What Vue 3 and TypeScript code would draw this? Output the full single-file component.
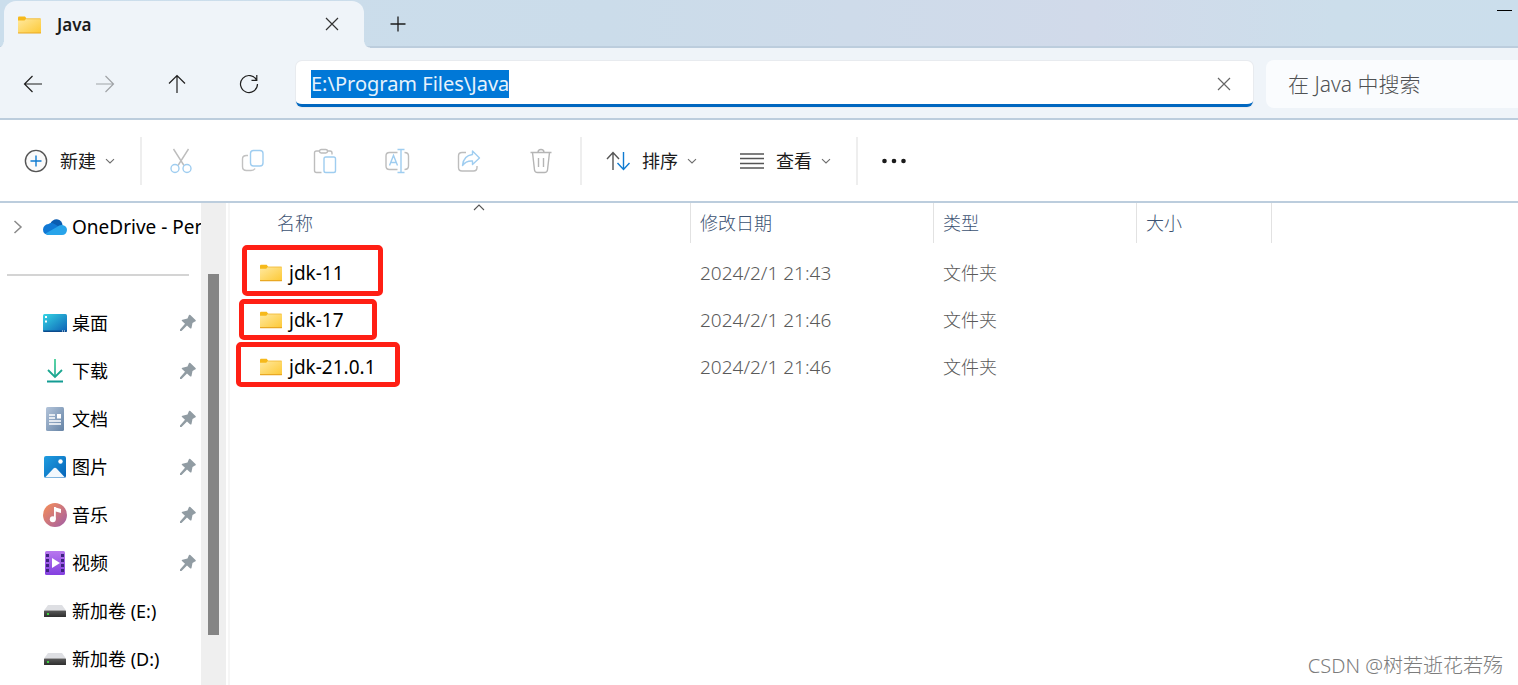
<script setup lang="ts">
import { onMounted, ref } from 'vue'

interface QuickItem {
  id: string
  label: string
  pinned: boolean
}

interface Entry {
  name: string
  modified: string
  kind: string
  mark: string
}

const path = ref<string>('E:\\Program Files\\Java')
const query = ref<string>('')
const addressInput = ref<HTMLInputElement | null>(null)

const quickItems: QuickItem[] = [
  { id: 'desktop', label: '桌面', pinned: true },
  { id: 'downloads', label: '下载', pinned: true },
  { id: 'documents', label: '文档', pinned: true },
  { id: 'pictures', label: '图片', pinned: true },
  { id: 'music', label: '音乐', pinned: true },
  { id: 'videos', label: '视频', pinned: true },
  { id: 'drive', label: '新加卷 (E:)', pinned: false },
  { id: 'drive', label: '新加卷 (D:)', pinned: false },
]

const entries: Entry[] = [
  { name: 'jdk-11', modified: '2024/2/1 21:43', kind: '文件夹', mark: 'mark-a' },
  { name: 'jdk-17', modified: '2024/2/1 21:46', kind: '文件夹', mark: 'mark-b' },
  { name: 'jdk-21.0.1', modified: '2024/2/1 21:46', kind: '文件夹', mark: 'mark-c' },
]

onMounted(() => {
  addressInput.value?.focus()
  addressInput.value?.select()
})
</script>

<template>
  <div class="explorer">
    <!-- Shared gradients and symbols -->
    <svg class="defs" width="0" height="0" aria-hidden="true">
      <defs>
        <linearGradient id="g-folder" x1="0" y1="0" x2="1" y2="1">
          <stop offset="0" stop-color="#ffe9a0" />
          <stop offset="1" stop-color="#fdc936" />
        </linearGradient>
        <linearGradient id="g-desktop" x1="0" y1="0" x2="1" y2="1">
          <stop offset="0" stop-color="#35d5e4" />
          <stop offset="1" stop-color="#0c5fb5" />
        </linearGradient>
        <linearGradient id="g-download" x1="0" y1="0" x2="0" y2="1">
          <stop offset="0" stop-color="#2ecb8c" />
          <stop offset="1" stop-color="#129a93" />
        </linearGradient>
        <linearGradient id="g-document" x1="0" y1="0" x2="1" y2="1">
          <stop offset="0" stop-color="#b3c4da" />
          <stop offset="1" stop-color="#6583a5" />
        </linearGradient>
        <linearGradient id="g-picture" x1="0" y1="0" x2="1" y2="1">
          <stop offset="0" stop-color="#1f9de0" />
          <stop offset="1" stop-color="#0563b8" />
        </linearGradient>
        <linearGradient id="g-music" x1="0" y1="0" x2="1" y2="1">
          <stop offset="0.1" stop-color="#f08a5d" />
          <stop offset="0.9" stop-color="#a9629f" />
        </linearGradient>
        <linearGradient id="g-video" x1="0" y1="0" x2="0" y2="1">
          <stop offset="0" stop-color="#b878ee" />
          <stop offset="1" stop-color="#8440e0" />
        </linearGradient>
        <linearGradient id="g-drive" x1="0" y1="0" x2="0" y2="1">
          <stop offset="0" stop-color="#5a5a5a" />
          <stop offset="1" stop-color="#2e2e2e" />
        </linearGradient>
      </defs>
      <symbol id="s-folder" viewBox="0 0 23 18">
        <path d="M0 1.5Q0 .5 1 .5H7L9 3V5H0z" fill="#f6b91b" />
        <path d="M0 4.5H6.5L8.5 2.5H22Q23 2.5 23 3.5V17H0z" fill="url(#g-folder)" />
        <path d="M8.5 2.8H22.6" stroke="#efb93a" stroke-width=".8" />
        <path d="M0 16.4H23V17Q23 17.6 22.2 17.6H.8Q0 17.6 0 17z" fill="#e9a823" />
      </symbol>
      <symbol id="s-chevron" viewBox="0 0 12 12">
        <path d="M2 4.2L6 8L10 4.2" fill="none" stroke="#6d6d6d" stroke-width="1.1" />
      </symbol>
      <symbol id="s-close" viewBox="0 0 14 14">
        <path d="M1 1L13 13M13 1L1 13" fill="none" stroke="currentColor" stroke-width="1.2" />
      </symbol>
    </svg>

    <header class="tabs">
      <div class="tab">
        <svg class="tab-folder"><use href="#s-folder" /></svg>
        <span class="tab-title">Java</span>
        <button class="plain tab-close" type="button" aria-label="关闭选项卡">
          <svg width="14" height="14"><use href="#s-close" /></svg>
        </button>
      </div>
      <button class="plain tab-new" type="button" aria-label="新建选项卡">
        <svg width="16" height="16" viewBox="0 0 16 16">
          <path d="M8 .5V15.5M.5 8H15.5" stroke="#1c1c1c" stroke-width="1.3" />
        </svg>
      </button>
      <button class="plain minimize" type="button" aria-label="最小化">
        <svg width="16" height="2"><rect width="15" height="1" x="0" y="0" fill="#000" /></svg>
      </button>
    </header>

    <nav class="navbar">
      <button class="plain tool" type="button" aria-label="后退">
        <svg width="20" height="20" viewBox="0 0 20 20">
          <path d="M19 10H1.5M9.5 2L1.5 10L9.5 18" fill="none" stroke="#1f1f1f" stroke-width="1.2" />
        </svg>
      </button>
      <button class="plain tool" type="button" aria-label="前进" disabled>
        <svg width="20" height="20" viewBox="0 0 20 20">
          <path d="M1 10H18.5M10.5 2L18.5 10L10.5 18" fill="none" stroke="#a0a3a7" stroke-width="1.2" />
        </svg>
      </button>
      <button class="plain tool" type="button" aria-label="向上">
        <svg width="20" height="20" viewBox="0 0 20 20">
          <path d="M10 19V1.5M2 9.5L10 1.5L18 9.5" fill="none" stroke="#1f1f1f" stroke-width="1.2" />
        </svg>
      </button>
      <button class="plain tool" type="button" aria-label="刷新">
        <svg width="20" height="20" viewBox="0 0 20 20">
          <path d="M17.6 6.2A8.5 8.500 0 1 0 18.5 10M17.800 1V6.300H12.500" fill="none" stroke="#1f1f1f" stroke-width="1.2" />
        </svg>
      </button>

      <div class="address">
        <input ref="addressInput" v-model="path" type="text" aria-label="地址" spellcheck="false" />
        <button class="plain address-clear" type="button" aria-label="清除">
          <svg width="14" height="14"><use href="#s-close" /></svg>
        </button>
      </div>
      <input v-model="query" class="search" type="text" aria-label="搜索" placeholder="在 Java 中搜索" />
    </nav>

    <div class="toolbar">
      <button class="plain command" type="button">
        <svg width="24" height="24" viewBox="0 0 24 24">
          <circle cx="12" cy="12" r="10.6" fill="#fafafa" stroke="#555" stroke-width="1.4" />
          <path d="M12 6.5V17.5M6.5 12H17.5" stroke="#0f7bd1" stroke-width="1.4" />
        </svg>
        <span>新建</span>
        <svg class="chevron"><use href="#s-chevron" /></svg>
      </button>
      <span class="divider"></span>
      <div class="icon-group">
        <button class="plain tool" type="button" aria-label="剪切" disabled>
          <svg width="24" height="26" viewBox="0 0 24 26" fill="none" stroke-width="1.4">
            <path d="M4.5 1L15 17.5M19.5 1L9 17.5" stroke="#bdbdbd" />
            <circle cx="6" cy="20.5" r="4" stroke="#9fcdf0" />
            <circle cx="18" cy="20.5" r="4" stroke="#9fcdf0" />
          </svg>
        </button>
        <button class="plain tool" type="button" aria-label="复制" disabled>
          <svg width="24" height="24" viewBox="0 0 24 24" fill="none" stroke-width="1.4">
            <path d="M7 6.5H5.5Q1.5 6.5 1.5 10V17.5Q1.5 21.5 5.5 21.5H10Q13 21.5 14 19.5" stroke="#c2c2c2" />
            <rect x="9.5" y="1.5" width="12.5" height="15.5" rx="3" stroke="#9fcdf0" />
          </svg>
        </button>
        <button class="plain tool" type="button" aria-label="粘贴" disabled>
          <svg width="24" height="26" viewBox="0 0 24 26" fill="none" stroke-width="1.4">
            <path d="M6.5 3H3.5Q1.5 3 1.5 5V22.5Q1.5 24.5 3.5 24.5H8.5M14 3H17Q19 3 19 5V6.5" stroke="#bdbdbd" />
            <rect x="6.5" y="1.5" width="8" height="3.5" rx="1.7" stroke="#bdbdbd" />
            <rect x="11" y="9" width="11.5" height="15.5" rx="1.8" stroke="#9fcdf0" />
          </svg>
        </button>
        <button class="plain tool" type="button" aria-label="重命名" disabled>
          <svg width="26" height="26" viewBox="0 0 26 26" fill="none" stroke-width="1.4">
            <path d="M13.5 4.5H5.5Q2 4.5 2 8V18Q2 21.5 5.5 21.5H13.5M20.5 4.5Q24.5 4.5 24.5 8V18Q24.5 21.5 20.5 21.5" stroke="#bdbdbd" />
            <path d="M17 1.5V24.5M13.5 1.5H20.5M13.5 24.5H20.5M5.5 17.5L9.5 7.5L13.5 17.5M7 14.5H12" stroke="#9fcdf0" />
          </svg>
        </button>
        <button class="plain tool" type="button" aria-label="共享" disabled>
          <svg width="24" height="24" viewBox="0 0 24 24" fill="none" stroke-width="1.4">
            <path d="M9 3.5H5Q1.5 3.5 1.5 7V18.5Q1.5 22 5 22H16.5Q20 22 20 18.5V17" stroke="#bdbdbd" />
            <path d="M15.5 2L22.5 9L15.5 15.5V12Q9 11.5 5.5 16.5Q6.5 6.5 15.5 5.5z" stroke="#9fcdf0" stroke-linejoin="round" />
          </svg>
        </button>
        <button class="plain tool" type="button" aria-label="删除" disabled>
          <svg width="24" height="26" viewBox="0 0 24 26" fill="none" stroke="#b5b5b5" stroke-width="1.4">
            <path d="M1.5 4.5H22.5M9 4.5Q9 1.5 12 1.5T15 4.5M3.5 4.5L5.5 22Q5.8 24.5 8.5 24.5H15.5Q18.2 24.5 18.5 22L20.5 4.5M9.5 10V19M14.5 10V19" />
          </svg>
        </button>
      </div>
      <span class="divider"></span>
      <button class="plain command" type="button">
        <svg width="24" height="20" viewBox="0 0 24 20" fill="none" stroke-width="1.4">
          <path d="M7 19V1.5M1 8L7 1.5L13 8" stroke="#555" />
          <path d="M17.5 1V18.5M11.5 12L17.5 18.5L23.5 12" stroke="#0f7bd1" />
        </svg>
        <span>排序</span>
        <svg class="chevron"><use href="#s-chevron" /></svg>
      </button>
      <button class="plain command view" type="button">
        <svg width="24" height="18" viewBox="0 0 24 18">
          <path d="M0 2H24M0 6.5H24M0 11.5H24M0 16H24" stroke="#555" stroke-width="1.3" />
        </svg>
        <span>查看</span>
        <svg class="chevron"><use href="#s-chevron" /></svg>
      </button>
      <span class="divider"></span>
      <button class="plain more" type="button" aria-label="查看更多">
        <svg width="24" height="6" viewBox="0 0 24 6" fill="#1b1b1b">
          <circle cx="2.5" cy="3" r="2.3" /><circle cx="12" cy="3" r="2.3" /><circle cx="21.5" cy="3" r="2.3" />
        </svg>
      </button>
    </div>

    <div class="content">
      <aside class="sidebar">
        <a class="side-item cloud" href="#">
          <svg class="expander" width="10" height="16" viewBox="0 0 10 16">
            <path d="M1.5 2L8 8L1.5 14" fill="none" stroke="#8a8a8a" stroke-width="1.5" />
          </svg>
          <svg class="side-icon" viewBox="0 0 24 24">
            <path d="M7 9Q10 3.5 15 4.5Q19 5.5 19.5 10L12 14z" fill="#0a5cb0" />
            <path d="M5 20Q0 19 0 14.5Q.5 9.5 5.5 9Q8 7 11.5 9L18 13L8 20z" fill="#1078d4" />
            <path d="M2.5 18.5L14 12Q16.5 9.500 19.500 10Q24 11 24 15Q23.500 20 19 20H6Q4 20 2.500 18.500z" fill="#28a4ea" />
          </svg>
          <span>OneDrive - Per</span>
        </a>
        <hr />
        <a v-for="item in quickItems" :key="item.label" class="side-item" href="#">
          <svg class="side-icon" viewBox="0 0 24 24">
            <template v-if="item.id === 'desktop'">
              <rect x="0" y="3" width="24" height="18" rx="1.5" fill="url(#g-desktop)" />
              <path d="M0 19.5H24Q24 21 22.5 21H1.5Q0 21 0 19.5z" fill="#0b4a8c" />
              <path d="M2 5H4V7H2zM2 9.5H4V11.5H2zM19 19.5H20V20.5H19zM21 19.5H22V20.5H21z" fill="#fff" />
            </template>
            <template v-else-if="item.id === 'downloads'">
              <path d="M11.2 0H12.8V17H11.2zM4 21.5H20V23.5H4z" fill="url(#g-download)" />
              <path d="M5 11L12 18L19 11" fill="none" stroke="#1ba790" stroke-width="1.8" />
            </template>
            <template v-else-if="item.id === 'documents'">
              <rect x="3" y="0" width="18" height="24" rx="1.5" fill="url(#g-document)" />
              <path d="M6 8H12M6 11H12M6 14H18M6 17H18" stroke="#fff" stroke-width="1.3" />
              <rect x="14" y="7" width="4" height="4.5" fill="#fff" />
            </template>
            <template v-else-if="item.id === 'pictures'">
              <rect x="1" y="1" width="22" height="22" rx="2" fill="url(#g-picture)" />
              <path d="M2 22.5L10.5 13.5Q12 12 13.5 13.5L22 22.5z" fill="#f2f8fd" />
              <circle cx="17.5" cy="6.5" r="2.2" fill="#fff" />
            </template>
            <template v-else-if="item.id === 'music'">
              <circle cx="12" cy="12" r="12" fill="url(#g-music)" />
              <path d="M11.9 4V16" stroke="#fff" stroke-width="1.8" />
              <path d="M11 4L18 6V10L11 8z" fill="#fff" />
              <circle cx="9.8" cy="16.3" r="3" fill="#fff" />
            </template>
            <template v-else-if="item.id === 'videos'">
              <rect x="2" y="0" width="20" height="24" rx="1.5" fill="url(#g-video)" />
              <path d="M4.5 3V22M19.5 3V22" stroke="#3f2382" stroke-width="3" stroke-dasharray="3 2" />
              <path d="M9 7L17 12L9 17z" fill="#fff" />
            </template>
            <template v-else>
              <path d="M5 6H19L23 11.5H1z" fill="#dedfe3" />
              <rect x="1" y="11.5" width="22" height="6.5" rx=".6" fill="url(#g-drive)" />
              <rect x="4" y="14" width="2" height="2" fill="#3fd43f" />
            </template>
          </svg>
          <span>{{ item.label }}</span>
          <svg v-if="item.pinned" class="pin" width="16" height="18" viewBox="0 0 16 18" fill="#919ca3">
            <path d="M9 1Q9.5 .3 10.3 1L15.5 6Q16.3 7 15 7.5L12.5 9L11.5 14Q11 15 10 14.2L7 11.5L1.5 17H0V15.5L5 9.8L2 7Q1.2 6 2.5 5.7L7.5 4.5z" />
          </svg>
        </a>
      </aside>
      <div class="scroll-track"><div class="scroll-thumb"></div></div>

      <main class="listing">
        <table>
          <colgroup>
            <col class="col-name" />
            <col class="col-date" />
            <col class="col-kind" />
            <col class="col-size" />
            <col />
          </colgroup>
          <thead>
            <tr>
              <th class="name" scope="col">
                名称
                <svg class="sort" width="12" height="7" viewBox="0 0 12 7">
                  <path d="M1 6L6 1L11 6" fill="none" stroke="#555" stroke-width="1.1" />
                </svg>
              </th>
              <th scope="col">修改日期</th>
              <th scope="col">类型</th>
              <th scope="col">大小</th>
              <td></td>
            </tr>
          </thead>
          <tbody>
            <tr v-for="entry in entries" :key="entry.name">
              <td class="name">
                <span class="file">
                  <svg class="file-folder"><use href="#s-folder" /></svg>
                  <span>{{ entry.name }}</span>
                </span>
                <span class="mark" :class="entry.mark"></span>
              </td>
              <td class="date">{{ entry.modified }}</td>
              <td>{{ entry.kind }}</td>
              <td></td>
              <td></td>
            </tr>
          </tbody>
        </table>
      </main>
      <p class="credit">CSDN @树若逝花若殇</p>
    </div>
  </div>
</template>

<style>
body {
  margin: 0;
  background: #fff;
}
</style>

<style scoped>
.explorer {
  display: flex;
  flex-direction: column;
  min-height: 100vh;
  overflow: hidden;
  background: #fff;
  color: #1b1b1b;
  font: 18px/24px "Noto Sans", "Noto Sans CJK SC", sans-serif;
}

.explorer,
.explorer * {
  box-sizing: border-box;
}

.defs {
  position: absolute;
}

svg {
  display: block;
  flex: none;
}

.plain {
  display: flex;
  align-items: center;
  justify-content: center;
  padding: 0;
  border: 0;
  background: none;
  color: inherit;
  font: inherit;
}

/* Tab strip */
.tabs {
  display: flex;
  height: 48px;
  padding-left: 4px;
  border-bottom: 2px solid #bccddd;
  background: linear-gradient(90deg, #cbdeec 0%, #cbdcea 40%, #d1daea 72%, #ccdeeb 88%, #cbdeec 100%);
}

.tab {
  position: relative;
  display: flex;
  align-items: center;
  width: 360px;
  height: 47px;
  margin-top: 1px;
  padding: 0 24px 0 14px;
  border-radius: 12px 12px 0 0;
  background: #eff4f9;
}

.tab::before,
.tab::after {
  content: "";
  position: absolute;
  bottom: 0;
  width: 6px;
  height: 6px;
}

.tab::before {
  right: 100%;
  background: radial-gradient(circle at 0 0, transparent 5px, #eff4f9 6px);
}

.tab::after {
  left: 100%;
  background: radial-gradient(circle at 100% 0, transparent 5px, #eff4f9 6px);
}

.tab-folder {
  width: 23px;
  height: 18px;
}

.tab-title {
  margin-left: 16px;
  font-size: 17px;
  font-weight: 600;
}

.tab-close {
  width: 16px;
  height: 24px;
  margin-left: auto;
  padding-bottom: 2px;
  color: #333;
}

.tab-new {
  width: 48px;
  margin-left: 10px;
  padding-top: 2px;
}

.minimize {
  align-items: flex-start;
  height: 24px;
  margin-left: auto;
  padding: 10px 5px 0 0;
}

/* Navigation row */
.navbar {
  display: flex;
  align-items: center;
  height: 72px;
  padding: 2px 0 0 9px;
  gap: 24px;
  border-bottom: 2px solid #bccddd;
  background: #eff4f9;
}

.tool {
  flex: none;
  width: 48px;
  height: 48px;
}

.address {
  display: flex;
  flex: 1;
  align-items: center;
  min-width: 0;
  height: 46px;
  margin-left: -1px;
  padding: 2px 22px 0 15px;
  border-bottom: 3px solid #0067c0;
  border-radius: 6px;
  background: #fff;
  box-shadow: 0 0 0 1px #e8ebef;
}

.address input {
  flex: 1;
  min-width: 0;
  padding: 0;
  border: 0;
  outline: 0;
  background: none;
  color: #1b1b1b;
  font: 20px/28px "Noto Sans", "Noto Sans CJK SC", sans-serif;
}

.address input::selection {
  background: #0078d7;
  color: #e6f2fc;
}

.address-clear {
  color: #666;
}

.search {
  width: 252px;
  height: 48px;
  margin-left: -11px;
  padding: 0 22px;
  border: 0;
  border-radius: 8px 0 0 8px;
  outline: 0;
  background: #fafcfe;
  color: #1b1b1b;
  font: 300 21px/28px "Noto Sans", "Noto Sans CJK SC", sans-serif;
}

.search::placeholder {
  color: #505254;
  opacity: 1;
}

/* Command bar */
.toolbar {
  display: flex;
  align-items: center;
  height: 83px;
  padding-left: 24px;
  border-bottom: 2px solid #bccddd;
}

.command {
  gap: 12px;
  height: 48px;
}

.chevron {
  width: 12px;
  height: 12px;
  margin-left: -4px;
}

.divider {
  flex: none;
  width: 2px;
  height: 48px;
  margin: 0 24px;
  background: #eee;
}

.icon-group {
  display: flex;
  gap: 24px;
  margin: 0 -9px;
}

.view {
  margin-left: 42px;
}

/* Body */
.content {
  position: relative;
  display: flex;
  flex: 1;
}

.sidebar {
  width: 201px;
  overflow: hidden;
}

.side-item {
  display: flex;
  align-items: center;
  height: 48px;
  padding: 0 5px 0 43px;
  color: #000;
  text-decoration: none;
  white-space: nowrap;
}

.side-item > span {
  margin-left: 5px;
}

.cloud {
  padding: 0 0 0 13px;
  font-size: 19px;
}

.expander {
  margin-right: 20px;
}

.side-icon {
  width: 24px;
  height: 24px;
}

.pin {
  margin-left: auto;
}

hr {
  height: 2px;
  margin: 23px 12px 23px 7px;
  border: 0;
  background: #d4d4d4;
}

.scroll-track {
  flex: none;
  width: 25px;
  padding: 71px 7px 0;
  background: #efefef;
}

.scroll-thumb {
  height: 361px;
  background: #858585;
}

.listing {
  flex: 1;
  min-width: 0;
  margin-left: 2px;
  border-left: 2px solid #f6f6f6;
}

table {
  width: 100%;
  border-spacing: 0;
  table-layout: fixed;
}

.col-name {
  width: 461px;
}

.col-date {
  width: 243px;
}

.col-kind {
  width: 203px;
}

.col-size {
  width: 135px;
}

th {
  height: 40px;
  padding: 0 9px;
  border-right: 1px solid #e2e2e2;
  color: #3c5272;
  font-weight: 300;
  text-align: left;
}

th.name {
  position: relative;
  padding-left: 47px;
}

.sort {
  position: absolute;
  top: 1px;
  right: 0;
  left: 38px;
  margin: 0 auto;
}

tbody::before {
  content: "";
  display: block;
  height: 6px;
}

td {
  padding: 0 9px;
  color: #5a5a5a;
  font-weight: 300;
}

tbody td {
  height: 47px;
}

td.date {
  font-size: 19px;
}

td.name {
  position: relative;
  padding-left: 30px;
  color: #000;
  font-size: 19px;
  font-weight: 400;
}

.file {
  display: flex;
  align-items: center;
  gap: 7px;
}

.file-folder {
  width: 22px;
  height: 18px;
}

/* Hand-drawn highlight frames over the rows */
.mark {
  position: absolute;
  border: 5px solid #ff1f14;
  border-radius: 5px;
}

.mark-a {
  top: -4px;
  left: 12px;
  width: 141px;
  height: 51px;
}

.mark-b {
  top: 3px;
  left: 9px;
  width: 138px;
  height: 41px;
}

.mark-c {
  top: -1px;
  left: 6px;
  width: 164px;
  height: 45px;
}

.credit {
  position: absolute;
  right: 15px;
  bottom: 7px;
  margin: 0;
  color: #7c7c7c;
  font-size: 20px;
  font-weight: 300;
}
</style>
